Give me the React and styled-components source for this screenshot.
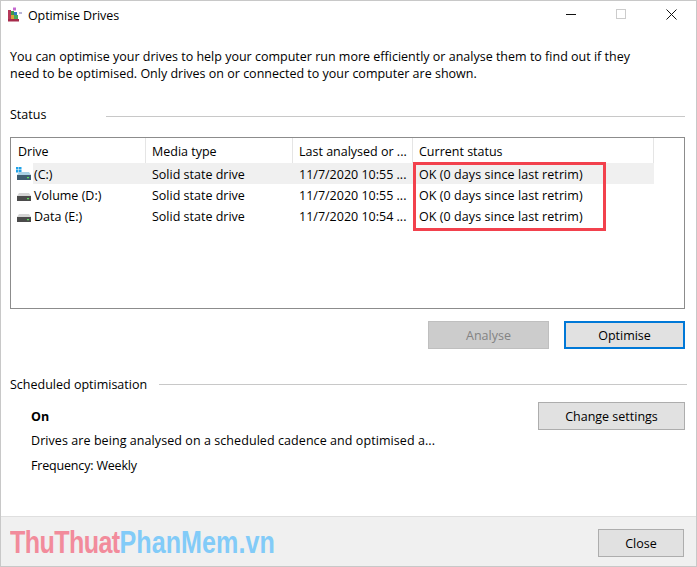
import React from 'react';
import styled, { createGlobalStyle } from 'styled-components';

const GlobalStyle = createGlobalStyle`
  html, body {
    margin: 0;
    padding: 0;
    background: #fff;
  }
  body {
    font-family: 'Open Sans', 'Noto Sans', sans-serif;
    font-size: 12.5px;
    color: #000;
  }
`;

const columns = [
  { label: 'Drive', width: 135 },
  { label: 'Media type', width: 147 },
  { label: 'Last analysed or ...', width: 120 },
  { label: 'Current status', width: 241 },
];

const drives = [
  { name: '(C:)', system: true, date: '11/7/2020 10:55 ...' },
  { name: 'Volume (D:)', date: '11/7/2020 10:55 ...' },
  { name: 'Data (E:)', date: '11/7/2020 10:54 ...' },
];

const AppIcon = () => (
  <svg width='16' height='16' viewBox='0 0 16 16'>
    <path d='M1 3h3v10H1z' fill='#b5395a' />
    <path d='M1 12h11v2.5H1z' fill='#a62b4b' />
    <path d='M4 4h3v4H4z' fill='#3f9a4a' />
    <path d='M7 5h3v3H7z' fill='#2f7fc1' />
    <path d='M4 8h3v4H4z' fill='#d9a437' />
    <path d='M7 8h4v4H7z' fill='#49a85a' />
    <path d='M6 0.500h3v3H6z' fill='#c56ad0' />
    <path d='M12 5h3v2h-3z' fill='#b9b6d8' />
  </svg>
);

const DriveIcon = ({ system }) => (
  <svg width='16' height='16' viewBox='0 0 16 16'>
    {system && (
      <path
        d='M0 1h2.500v2.500H0zM3 1h2.500v2.500H3zM0 4h2.500v2.500H0zM3 4h2.500v2.500H3z'
        fill='#1fa2e8'
      />
    )}
    <path d='M3 6h10l2 3H1z' fill={system ? '#a9d0e4' : '#d5d5d5'} />
    <path d='M1 9h14v5H1z' fill={system ? '#3d5c70' : '#4b4b4b'} />
    <path d='M11 11h2v1.200h-2z' fill='#5be05b' />
  </svg>
);

const App = () => {
  return (
    <>
      <GlobalStyle />
      <Window>
        <TitleBar>
          <AppIcon />
          <Title>Optimise Drives</Title>
          <WindowControls>
            <Minimise />
            <Maximise />
            <svg width='11' height='11' viewBox='0 0 11 11'>
              <path d='M.5.5l10 10M10.5.5l-10 10' stroke='#111' fill='none' />
            </svg>
          </WindowControls>
        </TitleBar>
        <Content>
          <Intro>
            You can optimise your drives to help your computer run more
            efficiently or analyse them to find out if they
            <br />
            need to be optimised. Only drives on or connected to your computer
            are shown.
          </Intro>
          <SectionHeading $gap={60} $lineOffset={4}>
            Status
          </SectionHeading>
          <DriveTable>
            <HeaderRow>
              {columns.map((col) => (
                <HeaderCell key={col.label} $width={col.width}>
                  {col.label}
                </HeaderCell>
              ))}
            </HeaderRow>
            <Rows>
              {drives.map((drive, i) => (
                <Row key={drive.name}>
                  <NameCell $selected={i === 0}>
                    <DriveIcon system={drive.system} />
                    <span>{drive.name}</span>
                  </NameCell>
                  <Cell $width={147} $selected={i === 0}>
                    Solid state drive
                  </Cell>
                  <Cell $width={120} $selected={i === 0}>
                    {drive.date}
                  </Cell>
                  <StatusCell $width={241} $selected={i === 0}>
                    OK (0 days since last retrim)
                  </StatusCell>
                </Row>
              ))}
              <Highlight />
            </Rows>
          </DriveTable>
          <ActionRow>
            <Button $disabled>Analyse</Button>
            <Button $focused>Optimise</Button>
          </ActionRow>
          <SectionHeading $gap={12} $scheduled>
            Scheduled optimisation
          </SectionHeading>
          <Schedule>
            <ScheduleText>
              <strong>On</strong>
              <Description>
                Drives are being analysed on a scheduled cadence and optimised a...
              </Description>
              <Frequency>Frequency: Weekly</Frequency>
            </ScheduleText>
            <SettingsButton>Change settings</SettingsButton>
          </Schedule>
        </Content>
        <Footer>
          <Brand>
            <Pink>ThuThuat</Pink>
            <Blue>PhanMem.vn</Blue>
          </Brand>
          <CloseButton>Close</CloseButton>
        </Footer>
      </Window>
    </>
  );
};

const Window = styled.div`
  box-sizing: border-box;
  display: flex;
  flex-direction: column;
  width: 697px;
  height: 567px;
  border: 1px solid #c8c8c8;
  overflow: hidden;
  background: #fff;
`;
const TitleBar = styled.div`
  box-sizing: border-box;
  display: flex;
  align-items: center;
  flex: none;
  height: 30px;
  padding: 0 0 2px 6px;
  gap: 5px;
`;
const Title = styled.div`
  font-size: 12.5px;
  letter-spacing: -0.1px;
`;
const WindowControls = styled.div`
  display: flex;
  align-items: center;
  gap: 40px;
  margin-left: auto;
  padding: 0 19px 2px 0;
`;
const Minimise = styled.div`
  width: 10px;
  height: 1px;
  background: #111;
`;
const Maximise = styled.div`
  box-sizing: border-box;
  width: 10px;
  height: 10px;
  border: 1px solid #ccc;
`;
const Content = styled.div`
  flex: 1;
  display: flex;
  flex-direction: column;
  padding: 17px 11px 0 9px;
`;
const Intro = styled.p`
  margin: 0;
  line-height: 17px;
  white-space: nowrap;
`;
const SectionHeading = styled.div`
  display: flex;
  align-items: center;
  gap: ${(p) => p.$gap}px;
  height: 18px;
  margin-top: ${(p) => (p.$scheduled ? '26px' : '23px')};
  margin-right: ${(p) => (p.$scheduled ? '-2px' : '0')};
  &::after {
    content: '';
    flex: 1;
    height: 1px;
    margin-top: ${(p) => p.$lineOffset || 0}px;
    background: #c8c8c8;
  }
`;
const DriveTable = styled.div`
  box-sizing: border-box;
  height: 172px;
  margin-top: 14px;
  border: 1px solid #8c8c8c;
`;
const HeaderRow = styled.div`
  display: flex;
  height: 25px;
`;
const HeaderCell = styled.div`
  box-sizing: border-box;
  width: ${(p) => p.$width}px;
  padding: 1px 0 0 6px;
  line-height: 25px;
  border-right: 1px solid #e5e5e5;
  &:first-child {
    padding-left: 7px;
  }
`;
const Rows = styled.div`
  position: relative;
`;
const Row = styled.div`
  display: flex;
  height: 21px;
  line-height: 21px;
`;
const NameCell = styled.div`
  display: flex;
  width: 135px;
  box-sizing: border-box;
  padding-left: 5px;
  align-items: center;
  gap: 2px;
  background: ${(p) =>
    p.$selected ? 'linear-gradient(to right, #fff 22px, #f0f0f0 22px)' : 'none'};
  svg {
    margin-top: 1px;
  }
  span {
    padding-top: 1px;
  }
`;
const Cell = styled.div`
  box-sizing: border-box;
  width: ${(p) => p.$width}px;
  padding: 1px 0 0 6px;
  white-space: nowrap;
  background: ${(p) => (p.$selected ? '#f0f0f0' : 'none')};
`;
const StatusCell = styled(Cell)`
  letter-spacing: 0.07px;
`;
const Highlight = styled.div`
  position: absolute;
  box-sizing: border-box;
  left: 402px;
  top: -1px;
  width: 193px;
  height: 69px;
  border: 3px solid #f2414d;
`;
const ActionRow = styled.div`
  display: flex;
  justify-content: flex-end;
  gap: 15px;
  margin-top: 12px;
`;
const Button = styled.div`
  box-sizing: border-box;
  display: flex;
  align-items: center;
  justify-content: center;
  width: 121px;
  height: 28px;
  background: ${(p) => (p.$disabled ? '#cccccc' : '#e1e1e1')};
  color: ${(p) => (p.$disabled ? '#838383' : '#000')};
  border: ${(p) => (p.$focused ? '2px solid #0078d7' : '1px solid #bfbfbf')};
`;
const Schedule = styled.div`
  display: flex;
  justify-content: space-between;
  align-items: flex-start;
  margin-top: 9px;
  padding-left: 21px;
`;
const ScheduleText = styled.div`
  padding-top: 5px;
  strong {
    display: block;
    line-height: 19px;
    font-weight: 700;
  }
`;
const Description = styled.p`
  margin: 4px 0 0;
  line-height: 21px;
  letter-spacing: 0.07px;
`;
const Frequency = styled.p`
  margin: 4px 0 0;
  line-height: 21px;
  letter-spacing: -0.18px;
`;
const SettingsButton = styled.div`
  box-sizing: border-box;
  display: flex;
  align-items: center;
  justify-content: center;
  width: 147px;
  height: 28px;
  background: #e1e1e1;
  border: 1px solid #adadad;
`;
const Footer = styled.div`
  flex: none;
  display: flex;
  align-items: center;
  justify-content: space-between;
  box-sizing: border-box;
  height: 50px;
  padding: 3px 12px 0 9px;
  background: #f0f0f0;
  border-top: 1px solid #dfdfdf;
`;
const Brand = styled.div`
  font-family: 'Liberation Sans', sans-serif;
  font-weight: 700;
  font-size: 31px;
  white-space: nowrap;
  width: 265px;
  transform: scaleX(0.81);
  transform-origin: left center;
`;
const Pink = styled.span`
  color: #f28b9b;
  letter-spacing: -0.75px;
`;
const Blue = styled.span`
  color: #82cbf8;
  letter-spacing: 0.07px;
`;
const CloseButton = styled.div`
  box-sizing: border-box;
  display: flex;
  align-items: center;
  justify-content: center;
  width: 86px;
  height: 28px;
  background: #e1e1e1;
  border: 1px solid #adadad;
`;

export default App;
